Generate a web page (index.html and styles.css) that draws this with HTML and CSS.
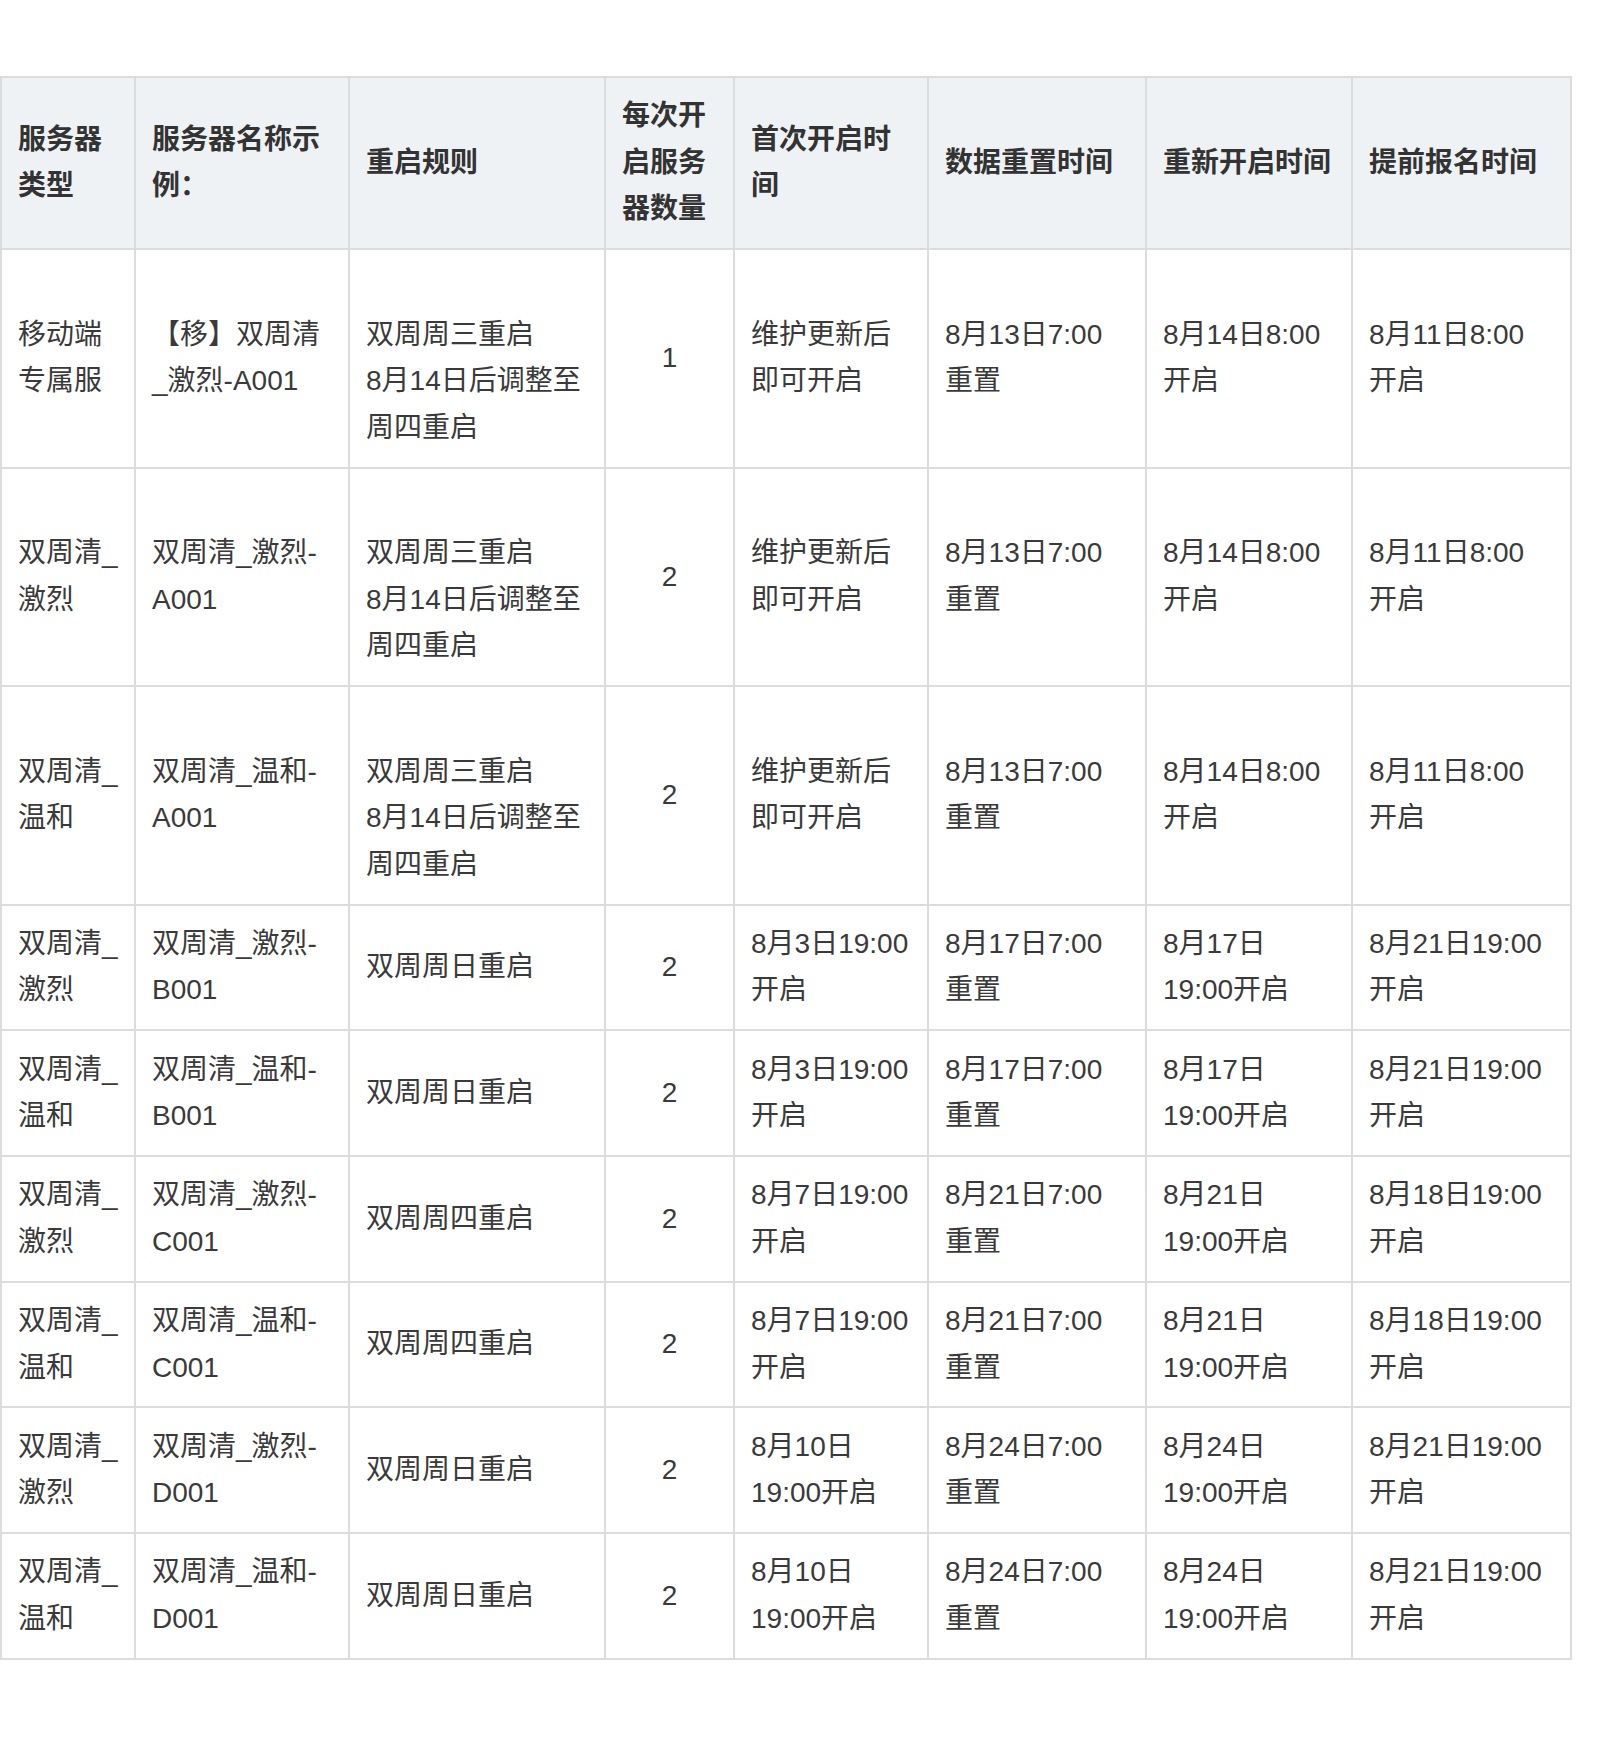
FILE: index.html
```
<!DOCTYPE html>
<html lang="zh-CN">
<head>
<meta charset="utf-8">
<title>服务器开启时间表</title>
<link rel="stylesheet" href="styles.css">
</head>
<body>
<div class="page">
<table class="schedule">
<colgroup>
<col class="c1"><col class="c2"><col class="c3"><col class="c4"><col class="c5"><col class="c6"><col class="c7"><col class="c8">
</colgroup>
<thead>
<tr>
<th>服务器<br>类型</th>
<th>服务器名称示<br>例：</th>
<th>重启规则</th>
<th>每次开<br>启服务<br>器数量</th>
<th>首次开启时<br>间</th>
<th>数据重置时间</th>
<th>重新开启时间</th>
<th>提前报名时间</th>
</tr>
</thead>
<tbody>
<tr>
<td>移动端<br>专属服</td>
<td>【移】双周清<br>_激烈-A001</td>
<td><br>双周周三重启<br>8月14日后调整至<br>周四重启</td>
<td class="num">1</td>
<td>维护更新后<br>即可开启</td>
<td>8月13日7:00<br>重置</td>
<td>8月14日8:00<br>开启</td>
<td>8月11日8:00<br>开启</td>
</tr>
<tr>
<td>双周清_<br>激烈</td>
<td>双周清_激烈-<br>A001</td>
<td><br>双周周三重启<br>8月14日后调整至<br>周四重启</td>
<td class="num">2</td>
<td>维护更新后<br>即可开启</td>
<td>8月13日7:00<br>重置</td>
<td>8月14日8:00<br>开启</td>
<td>8月11日8:00<br>开启</td>
</tr>
<tr>
<td>双周清_<br>温和</td>
<td>双周清_温和-<br>A001</td>
<td><br>双周周三重启<br>8月14日后调整至<br>周四重启</td>
<td class="num">2</td>
<td>维护更新后<br>即可开启</td>
<td>8月13日7:00<br>重置</td>
<td>8月14日8:00<br>开启</td>
<td>8月11日8:00<br>开启</td>
</tr>
<tr>
<td>双周清_<br>激烈</td>
<td>双周清_激烈-<br>B001</td>
<td>双周周日重启</td>
<td class="num">2</td>
<td>8月3日19:00<br>开启</td>
<td>8月17日7:00<br>重置</td>
<td>8月17日<br>19:00开启</td>
<td>8月21日19:00<br>开启</td>
</tr>
<tr>
<td>双周清_<br>温和</td>
<td>双周清_温和-<br>B001</td>
<td>双周周日重启</td>
<td class="num">2</td>
<td>8月3日19:00<br>开启</td>
<td>8月17日7:00<br>重置</td>
<td>8月17日<br>19:00开启</td>
<td>8月21日19:00<br>开启</td>
</tr>
<tr>
<td>双周清_<br>激烈</td>
<td>双周清_激烈-<br>C001</td>
<td>双周周四重启</td>
<td class="num">2</td>
<td>8月7日19:00<br>开启</td>
<td>8月21日7:00<br>重置</td>
<td>8月21日<br>19:00开启</td>
<td>8月18日19:00<br>开启</td>
</tr>
<tr>
<td>双周清_<br>温和</td>
<td>双周清_温和-<br>C001</td>
<td>双周周四重启</td>
<td class="num">2</td>
<td>8月7日19:00<br>开启</td>
<td>8月21日7:00<br>重置</td>
<td>8月21日<br>19:00开启</td>
<td>8月18日19:00<br>开启</td>
</tr>
<tr>
<td>双周清_<br>激烈</td>
<td>双周清_激烈-<br>D001</td>
<td>双周周日重启</td>
<td class="num">2</td>
<td>8月10日<br>19:00开启</td>
<td>8月24日7:00<br>重置</td>
<td>8月24日<br>19:00开启</td>
<td>8月21日19:00<br>开启</td>
</tr>
<tr>
<td>双周清_<br>温和</td>
<td>双周清_温和-<br>D001</td>
<td>双周周日重启</td>
<td class="num">2</td>
<td>8月10日<br>19:00开启</td>
<td>8月24日7:00<br>重置</td>
<td>8月24日<br>19:00开启</td>
<td>8月21日19:00<br>开启</td>
</tr>
</tbody>
</table>
</div>
</body>
</html>
```
FILE: styles.css
```
html, body {
  margin: 0;
  padding: 0;
  background: #ffffff;
}

.page {
  padding-top: 76px;
  font-family: "Liberation Sans", "Noto Sans CJK SC", sans-serif;
  font-size: 28px;
  line-height: 46.4px;
  color: #3a3a3a;
}

.schedule {
  border-collapse: collapse;
  table-layout: fixed;
  width: 1572px;
}

.c1 { width: 134px; }
.c2 { width: 214px; }
.c3 { width: 256px; }
.c4 { width: 129px; }
.c5 { width: 194px; }
.c6 { width: 218px; }
.c7 { width: 206px; }
.c8 { width: 219px; }

.schedule th,
.schedule td {
  border: 2px solid #dcdcdc;
  padding: 15.45px 16px;
  text-align: left;
  vertical-align: middle;
  white-space: nowrap;
}

.schedule th {
  background: #eff2f5;
  font-weight: 700;
  color: #333333;
}

.schedule td.num {
  text-align: center;
}
```
